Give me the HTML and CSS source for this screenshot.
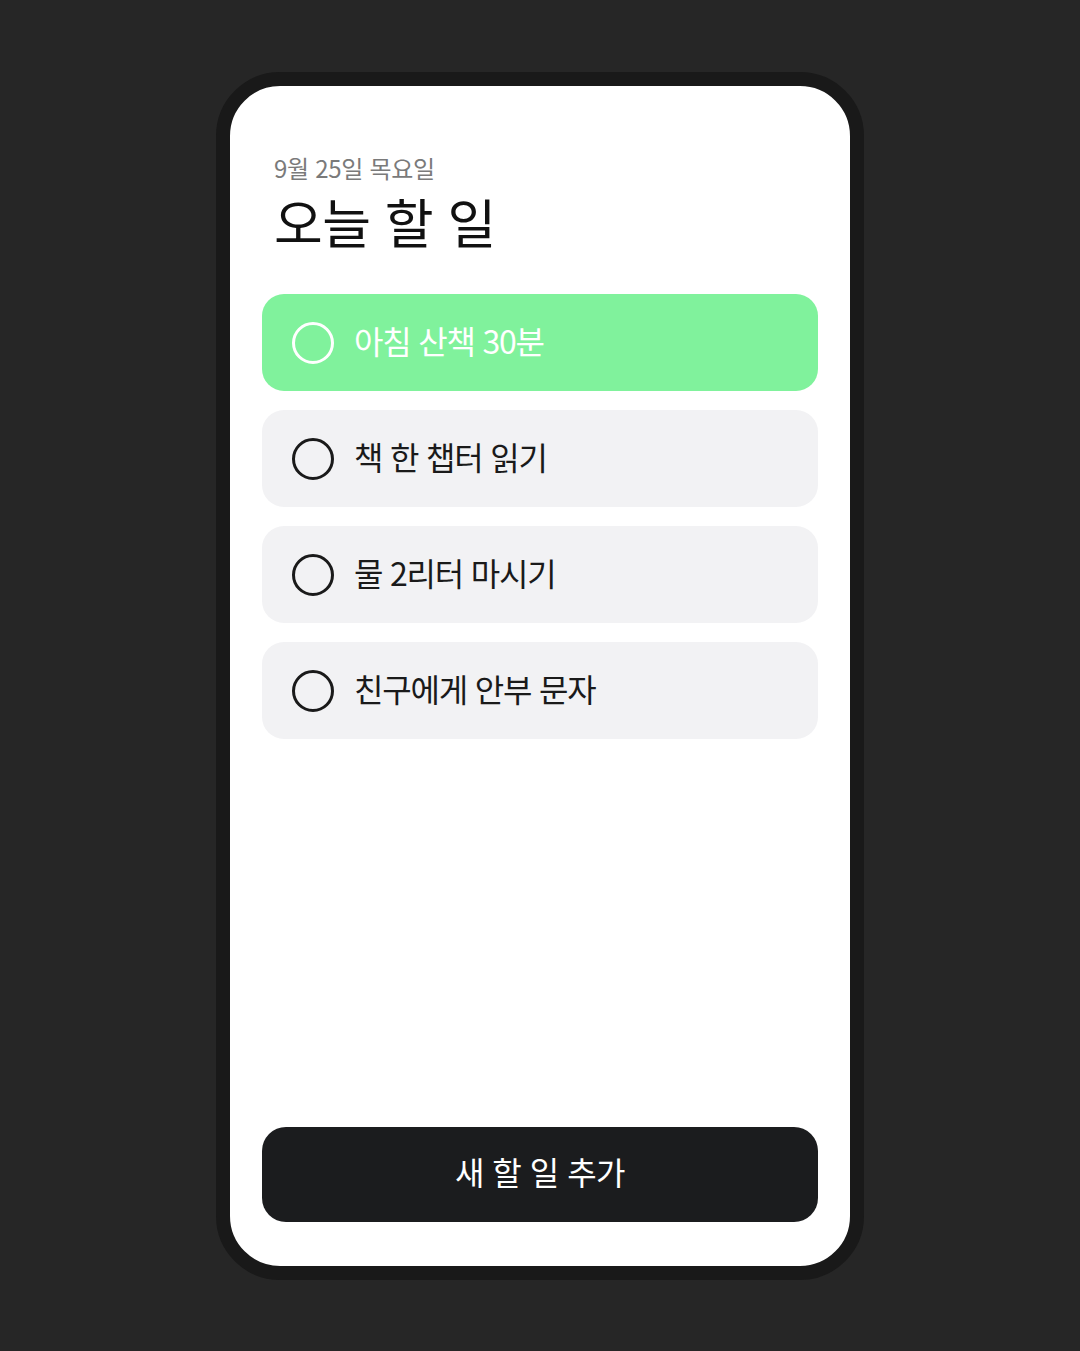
FILE: index.html
```html
<!DOCTYPE html>
<html lang="ko">
<head>
<meta charset="utf-8">
<link rel="stylesheet" href="styles.css">
</head>
<body>
<div class="phone">
  <div class="screen">
    <header class="header">
      <div class="date">9월 25일 목요일</div>
      <h1 class="title">오늘 할 일</h1>
    </header>
    <ul class="list">
      <li class="item item-active"><span class="check"></span><span class="label">아침 산책 30분</span></li>
      <li class="item"><span class="check"></span><span class="label">책 한 챕터 읽기</span></li>
      <li class="item"><span class="check"></span><span class="label">물 2리터 마시기</span></li>
      <li class="item"><span class="check"></span><span class="label">친구에게 안부 문자</span></li>
    </ul>
    <button class="add">새 할 일 추가</button>
  </div>
</div>
</body>
</html>
```

FILE: styles.css
```css
* { box-sizing: border-box; }
html, body { margin: 0; padding: 0; }
body {
  background: #262626;
  font-family: "Noto Sans CJK KR", "Noto Sans", sans-serif;
  width: 1080px;
  height: 1351px;
  overflow: hidden;
}
.phone {
  width: 648px;
  height: 1208px;
  margin: 72px auto 0;
  border: 14px solid #191919;
  border-radius: 64px;
  background: #ffffff;
  overflow: hidden;
}
.screen {
  height: 100%;
  padding: 0 32px 44px;
  display: flex;
  flex-direction: column;
}
.header {
  padding: 66px 12px 0;
}
.date {
  font-size: 24px;
  line-height: 32px;
  color: #7a7a7a;
  letter-spacing: -0.3px;
}
.title {
  margin: 5px 0 0;
  font-size: 53px;
  line-height: 64px;
  font-weight: 400;
  color: #111111;
  letter-spacing: -0.5px;
}
.list {
  list-style: none;
  margin: 41px 0 0;
  padding: 0;
  display: flex;
  flex-direction: column;
  gap: 19px;
}
.item {
  height: 97px;
  border-radius: 22px;
  background: #f2f2f4;
  display: flex;
  align-items: center;
  padding-left: 30px;
  gap: 20px;
}
.item-active { background: #80f29c; }
.check {
  width: 42px;
  height: 42px;
  border-radius: 50%;
  border: 3.5px solid #1a1a1a;
  flex: none;
}
.item-active .check { border-color: #ffffff; }
.label {
  font-size: 32px;
  color: #1a1a1a;
  letter-spacing: -1.2px;
  line-height: 40px;
  padding-bottom: 5px;
}
.item-active .label { color: #ffffff; }
.add {
  margin-top: auto;
  height: 95px;
  border: none;
  border-radius: 24px;
  background: #1b1c1e;
  color: #ffffff;
  font-family: inherit;
  font-size: 32px;
  letter-spacing: -0.5px;
  padding: 0 0 7px;
  cursor: pointer;
}
```
